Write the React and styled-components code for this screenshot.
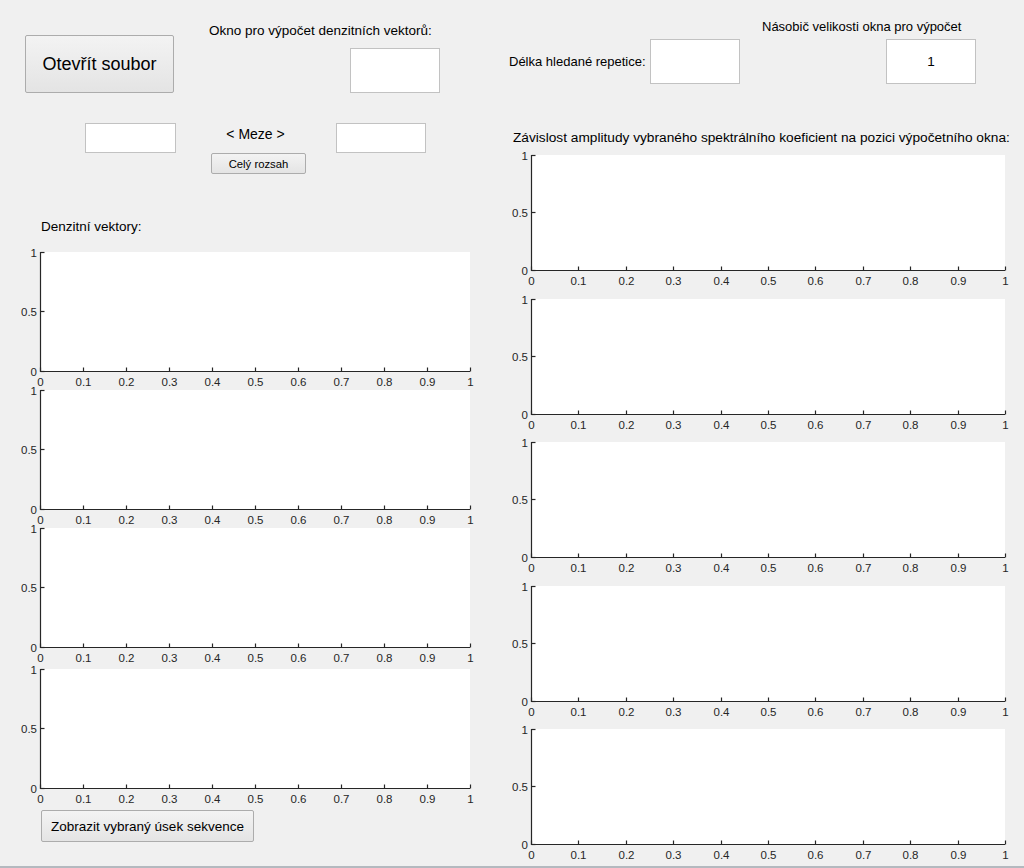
import styled, { createGlobalStyle } from 'styled-components'

const GlobalStyle = createGlobalStyle`
  html, body {
    margin: 0;
    padding: 0;
    background: #f0f0f0;
  }
  body {
    font-family: "Liberation Sans", Arial, sans-serif;
    color: #000;
  }
`

// ======================= STYLES =======================

const Window = styled.div`
  display: flex;
  width: 1024px;
  height: 868px;
  box-sizing: border-box;
  background: #f0f0f0;
  border-bottom: 2px solid #b4b9bf;
  overflow: hidden;
`

const Column = styled.div`
  display: flex;
  flex-direction: column;
  flex: 0 0 ${p => p.$width}px;
`

const Row = styled.div`
  display: flex;
  align-items: flex-start;
  margin-top: ${p => p.$top || 0}px;
  padding-left: ${p => p.$left || 0}px;
`

const Group = styled.div`
  display: flex;
  flex-direction: column;
  align-items: ${p => p.$align || 'flex-start'};
  width: ${p => p.$width}px;
  margin-top: ${p => p.$top || 0}px;
  margin-left: ${p => p.$left || 0}px;
`

const Label = styled.div`
  font-size: ${p => p.$size || 13.5}px;
  line-height: 16px;
  white-space: nowrap;
  margin-top: ${p => p.$top || 0}px;
  padding-left: ${p => p.$left || 0}px;
  padding-right: ${p => p.$right || 0}px;
  width: ${p => (p.$width ? `${p.$width}px` : 'auto')};
  flex: none;
`

const Field = styled.input`
  box-sizing: border-box;
  width: ${p => p.$w}px;
  height: ${p => p.$h}px;
  margin: ${p => p.$top || 0}px 0 0 ${p => p.$left || 0}px;
  padding: 0;
  border: 1px solid #c2c2c2;
  background: #fff;
  font-family: "Liberation Sans", Arial, sans-serif;
  font-size: 13.5px;
  text-align: center;
  color: #000;
  outline: none;
  align-self: ${p => p.$self || 'auto'};
  flex: none;
`

const Button = styled.button`
  box-sizing: border-box;
  width: ${p => p.$w}px;
  height: ${p => p.$h}px;
  margin: ${p => p.$top || 0}px 0 0 ${p => p.$left || 0}px;
  padding: 0;
  border: 1px solid #acacac;
  border-radius: 2px;
  background: linear-gradient(#f3f3f3, #e4e4e4);
  font-family: "Liberation Sans", Arial, sans-serif;
  font-size: ${p => p.$size}px;
  color: #000;
  white-space: nowrap;
  flex: none;
`

const PlotStack = styled.div`
  display: flex;
  flex-direction: column;
  margin-top: ${p => p.$top}px;
`

const AxesSvg = styled.svg`
  display: block;
  overflow: visible;
  flex: none;

  text {
    font-family: "Liberation Sans", Arial, sans-serif;
    font-size: 11.5px;
    fill: #262626;
  }
`

// ======================= AXES =======================

const TICKS = [0, 0.1, 0.2, 0.3, 0.4, 0.5, 0.6, 0.7, 0.8, 0.9, 1]

const Axes = ({ left, width, height, step }) => {
  const T = 6
  const x0 = left + 0.5
  const yB = T + height + 0.5
  const yTicks = [
    { v: '1', y: T + 0.5 },
    { v: '0.5', y: T + height / 2 },
    { v: '0', y: yB }
  ]
  return (
    <AxesSvg width={left + width + 8} height={step}>
      <rect x={left} y={T} width={width} height={height} fill='#fff' />
      <path d={`M${x0} ${T} V${yB} H${left + width}`} stroke='#262626' strokeWidth='1.2' fill='none' />
      {yTicks.map(t => (
        <g key={t.v}>
          <line x1={x0} x2={x0 + 4} y1={t.y} y2={t.y} stroke='#262626' strokeWidth='1.2' />
          <text x={left - 3} y={t.y + 4} textAnchor='end'>{t.v}</text>
        </g>
      ))}
      {TICKS.map(v => {
        const x = Math.round(left + width * v) + 0.5
        return (
          <g key={v}>
            <line x1={x} x2={x} y1={yB} y2={yB - 4} stroke='#262626' strokeWidth='1.2' />
            <text x={x} y={yB + 14} textAnchor='middle'>{String(v)}</text>
          </g>
        )
      })}
    </AxesSvg>
  )
}

// ======================= APP =======================

const leftSteps = [138, 138, 141, 138]
const rightSteps = [143.5, 143.5, 143.5, 143.5, 130]

const App = () => {
  return (
    <>
      <GlobalStyle />
      <Window>

        {/* levy sloupec */}
        <Column $width={490}>
          <Row>
            <Button $w={149} $h={58} $top={35} $left={25} $size={18}>Otevřít soubor</Button>
            <Group $width={231} $top={23} $left={35} $align='stretch'>
              <Label>Okno pro výpočet denzitních vektorů:</Label>
              <Field $w={90} $h={45} $top={9} $self='flex-end' />
            </Group>
          </Row>

          <Row $top={30} $left={85}>
            <Field $w={91} $h={30} />
            <Group $width={95} $left={35} $align='center'>
              <Label $size={14} $top={3} $right={6}>&lt; Meze &gt;</Label>
              <Button $w={95} $h={21} $top={11} $size={11.3}>Celý rozsah</Button>
            </Group>
            <Field $w={90} $h={30} $left={30} />
          </Row>

          <Label $top={45} $left={41}>Denzitní vektory:</Label>

          <PlotStack $top={11}>
            {leftSteps.map((s, i) => (
              <Axes key={i} left={40} width={430} height={119} step={s} />
            ))}
          </PlotStack>

          <Button $w={213} $h={32} $top={9} $left={41} $size={13.5}>Zobrazit vybraný úsek sekvence</Button>
        </Column>

        {/* pravy sloupec */}
        <Column $width={534}>
          <Row $left={19}>
            <Label $size={13} $top={54} $width={141}>Délka hledané repetice:</Label>
            <Field $w={90} $h={45} $top={39} />
            <Group $width={214} $top={19} $left={22} $align='stretch'>
              <Label $size={13}>Násobič velikosti okna pro výpočet</Label>
              <Field $w={90} $h={45} $top={4} $self='flex-end' defaultValue='1' />
            </Group>
          </Row>

          <Label $size={13.7} $top={46} $left={23}>Závislost amplitudy vybraného spektrálního koeficient na pozici výpočetního okna:</Label>

          <PlotStack $top={3}>
            {rightSteps.map((s, i) => (
              <Axes key={i} left={41} width={474} height={115} step={s} />
            ))}
          </PlotStack>
        </Column>

      </Window>
    </>
  )
}

export default App
